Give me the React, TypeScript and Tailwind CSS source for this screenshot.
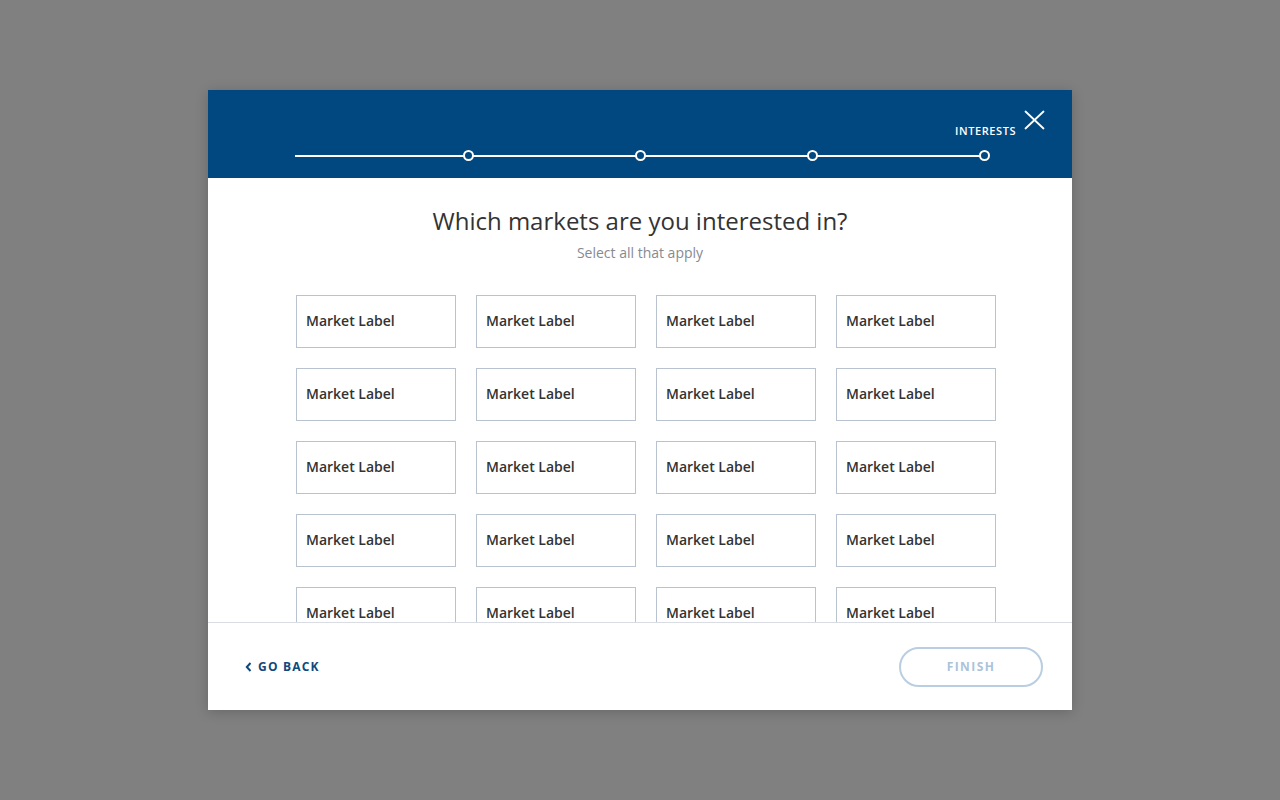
import React from 'react';

const steps = [468, 640, 812, 984];

const ProgressBar: React.FC = () => {
  return (
    <div className="relative w-[690px] h-[12px] ml-[87px]">
      <div className="absolute left-0 right-[4px] top-[5px] h-[2px] bg-white" />
      {steps.map((x, i) => (
        <div
          key={i}
          className="absolute top-0 w-[11px] h-[11px] rounded-full border-2 border-white bg-[#00487f]"
          style={{ left: x - 295 - 5 }}
        />
      ))}
      <div className="absolute -top-[25px] left-[660px] text-[11px] font-semibold tracking-[0.6px] text-white leading-none">
        INTERESTS
      </div>
    </div>
  );
};

const MarketCard: React.FC<{ label: string }> = ({ label }) => (
  <button className="flex items-center h-[53px] w-[160px] border border-[#b9c3cf] bg-white px-[9px] pb-[2px] text-left text-[14px] font-semibold text-[#333333]">
    {label}
  </button>
);

export default function App() {
  const markets = Array.from({ length: 20 }, () => 'Market Label');

  return (
    <div className="w-full h-[800px] bg-[#808080] flex items-center justify-center" style={{ fontFamily: '"Open Sans", "Noto Sans", sans-serif' }}>
      <div className="w-[864px] h-[620px] bg-white flex flex-col shadow-[0_2px_12px_rgba(0,0,0,0.2)]">
        {/* Header */}
        <div className="relative h-[88px] bg-[#00487f] flex flex-col justify-end pb-[16px] shrink-0">
          <ProgressBar />
          <button className="absolute top-[19px] right-[27px] w-[22px] h-[22px] flex items-center justify-center">
            <svg width="21" height="20" viewBox="0 0 21 20" fill="none" stroke="white" strokeWidth="1.8" strokeLinecap="round">
              <path d="M1.5 1.5 L19.5 18.5" />
              <path d="M19.5 1.5 L1.5 18.5" />
            </svg>
          </button>
        </div>

        {/* Body */}
        <div className="flex-1 overflow-hidden pt-[27px]">
          <h1 className="text-center text-[24px] leading-[32px] text-[#333333]">Which markets are you interested in?</h1>
          <p className="text-center text-[14px] leading-[20px] text-[#858a91] mt-[6px]">Select all that apply</p>
          <div className="grid grid-cols-[repeat(4,160px)] gap-[20px] pl-[88px] mt-[32px]">
            {markets.map((m, i) => (
              <MarketCard key={i} label={m} />
            ))}
          </div>
        </div>

        {/* Footer */}
        <div className="h-[88px] shrink-0 border-t border-[#d9dde3] flex items-center justify-between pl-[37px] pr-[29px]">
          <button className="flex items-center gap-[6px] text-[12px] font-bold tracking-[1.2px] text-[#0b4a80]">
            <svg width="7" height="10" viewBox="0 0 7 10" fill="none" stroke="#0b4a80" strokeWidth="2">
              <path d="M5.5 1 L1.8 5 L5.5 9" />
            </svg>
            GO BACK
          </button>
          <button className="w-[144px] h-[40px] rounded-full border-2 border-[#b9cee1] text-[12px] font-bold tracking-[1.4px] text-[#abc3da]">
            FINISH
          </button>
        </div>
      </div>
    </div>
  );
}
